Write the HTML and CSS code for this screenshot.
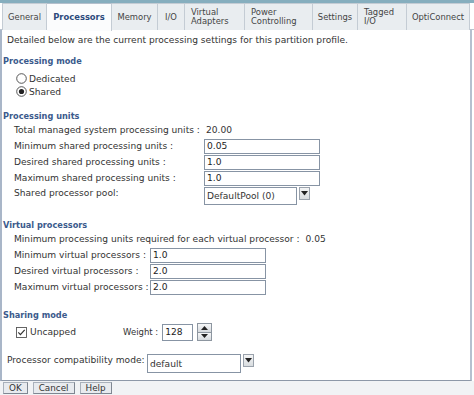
FILE: index.html
```html
<!DOCTYPE html>
<html>
<head>
<meta charset="utf-8">
<link rel="stylesheet" href="styles.css">
</head>
<body>
<div class="topstrip"></div>
<div class="tabs">
  <div class="tab t-general">General</div>
  <div class="tab active t-proc">Processors</div>
  <div class="tab t-mem">Memory</div>
  <div class="tab t-io">I/O</div>
  <div class="tab two t-va">Virtual<br>Adapters</div>
  <div class="tab two t-pc">Power<br>Controlling</div>
  <div class="tab t-set">Settings</div>
  <div class="tab two t-tio">Tagged<br>I/O</div>
  <div class="tab t-oc">OptiConnect</div>
</div>
<div class="panel">
  <p class="intro">Detailed below are the current processing settings for this partition profile.</p>

  <h3 class="heading h-mode">Processing mode</h3>
  <div class="radios">
    <div class="radio-row">
      <svg class="radio" width="11" height="11" viewBox="0 0 11 11"><circle cx="5.5" cy="5.5" r="4.8" fill="#fff" stroke="#444" stroke-width="0.9"/></svg>
      <span>Dedicated</span>
    </div>
    <div class="radio-row">
      <svg class="radio" width="11" height="11" viewBox="0 0 11 11"><circle cx="5.5" cy="5.5" r="4.8" fill="#fff" stroke="#444" stroke-width="0.9"/><circle cx="5.5" cy="5.5" r="2.6" fill="#222"/></svg>
      <span>Shared</span>
    </div>
  </div>

  <h3 class="heading h-units">Processing units</h3>
  <div class="form pu">
    <div class="row"><span class="label">Total managed system processing units :</span><span class="value">20.00</span></div>
    <div class="row"><span class="label">Minimum shared processing units :</span><span class="input">0.05</span></div>
    <div class="row"><span class="label">Desired shared processing units :</span><span class="input">1.0</span></div>
    <div class="row"><span class="label">Maximum shared processing units :</span><span class="input">1.0</span></div>
    <div class="row row-pool"><span class="label">Shared processor pool:</span>
      <span class="select pool">DefaultPool (0)</span>
      <span class="dd"><svg width="7" height="5" viewBox="0 0 7 5"><path d="M0 0 L7 0 L3.5 4.5 Z" fill="#222"/></svg></span>
    </div>
  </div>

  <h3 class="heading h-vp">Virtual processors</h3>
  <div class="form vp">
    <div class="row"><span class="label wide">Minimum processing units required for each virtual processor :</span><span class="value v2">0.05</span></div>
    <div class="row"><span class="label">Minimum virtual processors :</span><span class="input">1.0</span></div>
    <div class="row"><span class="label">Desired virtual processors :</span><span class="input">2.0</span></div>
    <div class="row"><span class="label">Maximum virtual processors :</span><span class="input">2.0</span></div>
  </div>

  <h3 class="heading h-sm">Sharing mode</h3>
  <div class="share-row">
    <div class="check">
      <svg width="11" height="11" viewBox="0 0 11 11"><rect x="0.5" y="0.5" width="10" height="10" fill="#fff" stroke="#555" stroke-width="0.9"/><path d="M2.3 5.4 L4.4 7.6 L8.7 2.8" fill="none" stroke="#333" stroke-width="1.2"/></svg>
      <span>Uncapped</span>
    </div>
    <span class="wlabel">Weight :</span>
    <span class="input weight">128</span>
    <span class="spin">
      <span class="spin-half"><svg width="7" height="4" viewBox="0 0 7 4"><path d="M0 4 L7 4 L3.5 0 Z" fill="#222"/></svg></span>
      <span class="spin-half"><svg width="7" height="4" viewBox="0 0 7 4"><path d="M0 0 L7 0 L3.5 4 Z" fill="#222"/></svg></span>
    </span>
  </div>

  <div class="compat-row">
    <span class="clabel">Processor compatibility mode:</span>
    <span class="select compat">default</span>
    <span class="dd"><svg width="7" height="5" viewBox="0 0 7 5"><path d="M0 0 L7 0 L3.5 4.5 Z" fill="#222"/></svg></span>
  </div>
</div>
<div class="buttons">
  <span class="btn">OK</span>
  <span class="btn">Cancel</span>
  <span class="btn">Help</span>
</div>
</body>
</html>
```
FILE: styles.css
```css
* { box-sizing: border-box; }
html, body {
  margin: 0;
  padding: 0;
  background: #ffffff;
}
body {
  width: 474px;
  height: 395px;
  overflow: hidden;
  font-family: "DejaVu Sans", Verdana, sans-serif;
  font-size: 9.1px;
  color: #333;
}
.topstrip {
  height: 3px;
  background: #86aebe;
}
.tabs {
  display: flex;
  height: 27px;
  padding-left: 2px;
  background: #fff;
  border-bottom: 1px solid #b9c3ce;
}
.tab {
  display: flex;
  align-items: center;
  justify-content: center;
  height: 27px;
  background: #e9edf0;
  border: 1px solid #c4ccd4;
  border-left: none;
  border-bottom: none;
  color: #444;
  font-size: 8.4px;
  line-height: 9px;
  text-align: left;
}
.tab.two { justify-content: flex-start; padding-left: 6px; }
.t-general { width: 45px; border-left: 1px solid #c4ccd4; }
.t-proc { width: 65px; }
.t-mem { width: 46px; }
.t-io { width: 27px; }
.t-va { width: 60px; }
.t-pc { width: 68px; }
.t-set { width: 45px; }
.t-tio { width: 49px; }
.t-oc { width: 63px; }
.tab.active {
  background: #fbfcfd;
  color: #2c4a7c;
  font-weight: bold;
  height: 28px;
  margin-bottom: -1px;
  position: relative;
  border-top: 1px solid #b3bfcc;
}
.panel {
  height: 351px;
  width: 472px;
  border-left: 2px solid #a9b6c8;
  border-right: 2px solid #b5c0cf;
  border-bottom: 1px solid #8d98a8;
  padding: 3px 0 0 5px;
  background: #fff;
}
.intro {
  margin: 0;
  line-height: 14px;
}
.heading {
  margin: 0 0 0 -4px;
  font-size: 8.2px;
  font-weight: bold;
  color: #3b5a8c;
  line-height: 12px;
}
.h-mode { margin-top: 8px; }
.radios { padding-left: 9px; margin-top: 5px; }
.radio-row {
  display: flex;
  align-items: center;
  height: 13px;
  gap: 2px;
}
.radio { display: block; }
.h-units { margin-top: 12px; }
.form { padding-left: 7px; }
.row {
  display: flex;
  align-items: center;
  height: 16px;
}
.pu .label { width: 190px; }
.vp .label { width: 136px; }
.vp .label.wide { width: auto; margin-right: 4px; }
.value { padding-left: 2px; }
.input {
  display: flex;
  align-items: center;
  width: 116px;
  height: 15px;
  border: 1px solid #8794a4;
  background: #fff;
  padding-left: 2px;
  color: #222;
}
.row-pool { height: 20px; align-items: flex-start; padding-top: 1px; }
.row-pool .label { padding-top: 1px; }
.select {
  display: flex;
  align-items: center;
  height: 18px;
  border: 1px solid #8794a4;
  background: #fff;
  padding-left: 2px;
  color: #333;
}
.pool { width: 93px; }
.dd {
  display: flex;
  align-items: center;
  justify-content: center;
  width: 11px;
  height: 13px;
  margin-left: 2px;
  background: linear-gradient(#f4f5f6, #d8dcdf);
  border: 1px solid #9aa2ac;
}
.h-vp { margin-top: 13px; }
.h-sm { margin-top: 14px; }
.share-row {
  display: flex;
  align-items: center;
  height: 20px;
  padding-left: 9px;
  margin-top: 1px;
}
.check {
  display: flex;
  align-items: center;
  gap: 3px;
  width: 107px;
}
.check svg { display: block; }
.wlabel { margin-right: 4px; font-size: 8.5px; }
.weight { width: 31px; height: 17px; }
.spin {
  display: flex;
  flex-direction: column;
  width: 15px;
  height: 18px;
  margin-left: 4px;
  border: 1px solid #8d96a0;
  background: #dde1e5;
}
.spin-half {
  flex: 1;
  display: flex;
  align-items: center;
  justify-content: center;
  background: linear-gradient(#f6f7f8, #d6dade);
}
.spin-half + .spin-half { border-top: 1px solid #8d96a0; }
.compat-row {
  display: flex;
  align-items: flex-start;
  margin-top: 11px;
}
.clabel { width: 140px; padding-top: 2px; }
.compat { width: 94px; height: 19px; margin-top: 1px; }
.compat + .dd { margin-left: 2px; margin-top: 1px; }
.buttons {
  display: flex;
  gap: 5px;
  padding: 1px 0 0 3px;
  background: #f1f3f5;
  height: 16px;
}
.btn {
  display: flex;
  align-items: center;
  justify-content: center;
  height: 12px;
  padding: 0 5px;
  background: #e8ebef;
  border: 1px solid #a9b1bb;
  border-right-color: #7f8792;
  border-bottom-color: #7f8792;
  font-size: 8.8px;
  color: #333;
}
```
